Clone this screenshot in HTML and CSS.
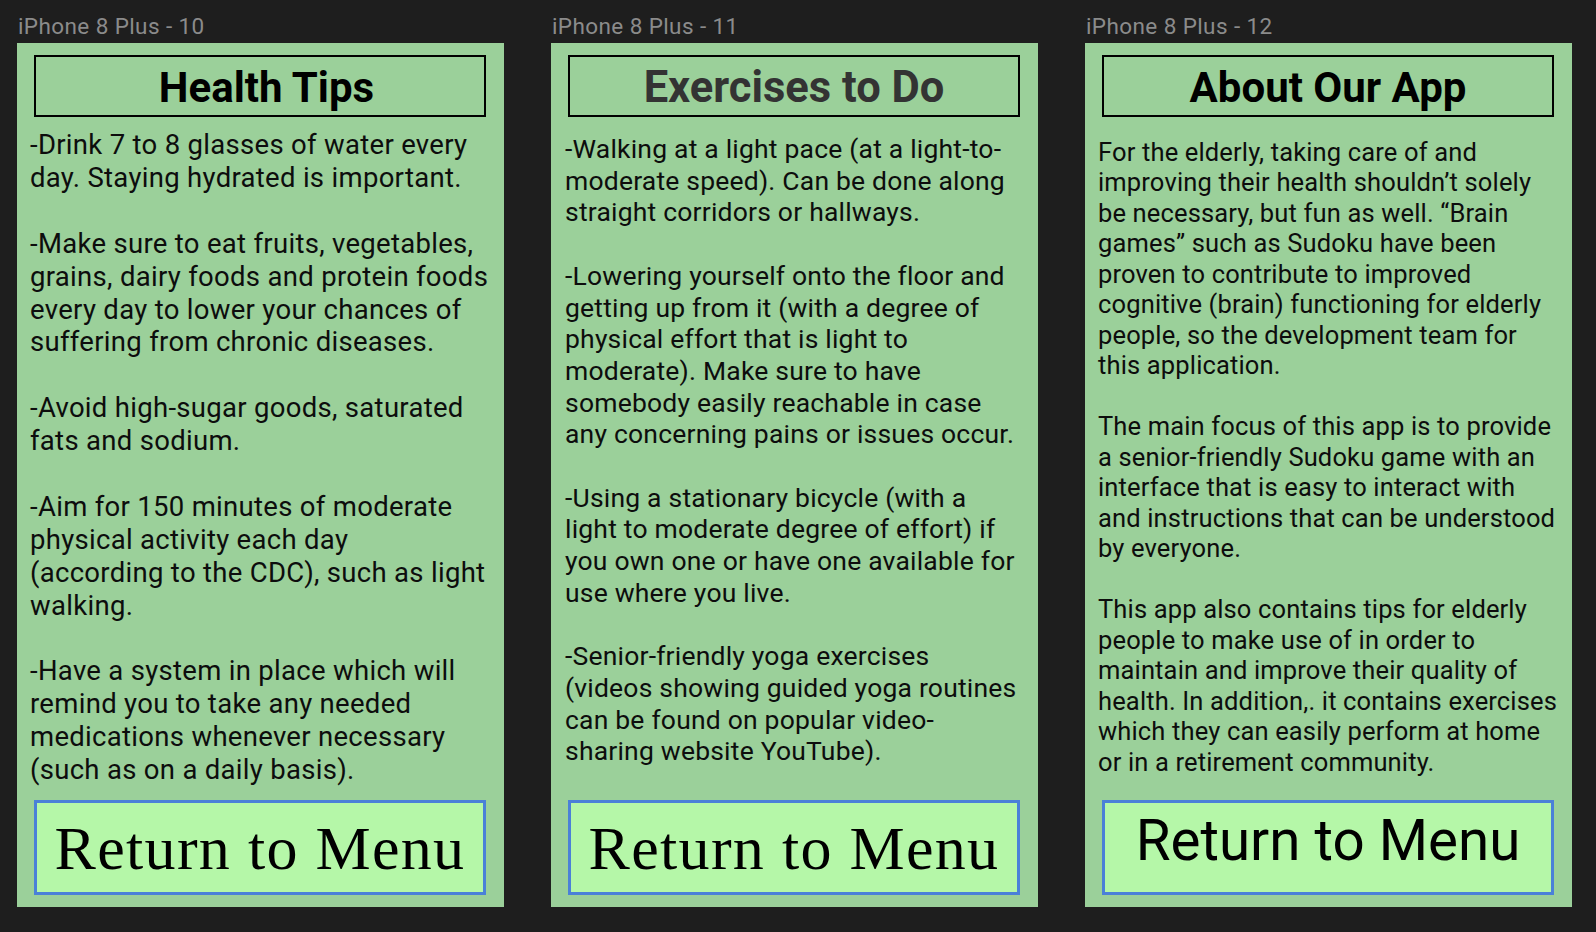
FILE: index.html
```html
<!DOCTYPE html>
<html lang="en">
<head>
<meta charset="utf-8">
<title>iPhone 8 Plus screens</title>
<link rel="stylesheet" href="styles.css">
</head>
<body>
<div class="canvas">
  <section class="frame">
    <div class="frame-label">iPhone 8 Plus - 10</div>
    <div class="screen">
      <h1 class="title title-shift">Health Tips</h1>
      <div class="body body-tips">
        <p>-Drink 7 to 8 glasses of water every<br>day. Staying hydrated is important.</p>
        <p>-Make sure to eat fruits, vegetables,<br>grains, dairy foods and protein foods<br>every day to lower your chances of<br>suffering from chronic diseases.</p>
        <p>-Avoid high-sugar goods, saturated<br>fats and sodium.</p>
        <p>-Aim for 150 minutes of moderate<br>physical activity each day<br>(according to the CDC), such as light<br>walking.</p>
        <p>-Have a system in place which will<br>remind you to take any needed<br>medications whenever necessary<br>(such as on a daily basis).</p>
      </div>
      <button class="menu-btn serif">Return to Menu</button>
    </div>
  </section>
  <section class="frame">
    <div class="frame-label">iPhone 8 Plus - 11</div>
    <div class="screen">
      <h1 class="title title-gray">Exercises to Do</h1>
      <div class="body body-ex">
        <p>-Walking at a light pace (at a light-to-<br>moderate speed). Can be done along<br>straight corridors or hallways.</p>
        <p>-Lowering yourself onto the floor and<br>getting up from it (with a degree of<br>physical effort that is light to<br>moderate). Make sure to have<br>somebody easily reachable in case<br>any concerning pains or issues occur.</p>
        <p>-Using a stationary bicycle (with a<br>light to moderate degree of effort) if<br>you own one or have one available for<br>use where you live.</p>
        <p>-Senior-friendly yoga exercises<br>(videos showing guided yoga routines<br>can be found on popular video-<br>sharing website YouTube).</p>
      </div>
      <button class="menu-btn serif">Return to Menu</button>
    </div>
  </section>
  <section class="frame">
    <div class="frame-label">iPhone 8 Plus - 12</div>
    <div class="screen">
      <h1 class="title">About Our App</h1>
      <div class="body body-about">
        <p>For the elderly, taking care of and<br>improving their health shouldn’t solely<br>be necessary, but fun as well. “Brain<br>games” such as Sudoku have been<br>proven to contribute to improved<br>cognitive (brain) functioning for elderly<br>people, so the development team for<br>this application.</p>
        <p>The main focus of this app is to provide<br>a senior-friendly Sudoku game with an<br>interface that is easy to interact with<br>and instructions that can be understood<br>by everyone.</p>
        <p>This app also contains tips for elderly<br>people to make use of in order to<br>maintain and improve their quality of<br>health. In addition,. it contains exercises<br>which they can easily perform at home<br>or in a retirement community.</p>
      </div>
      <button class="menu-btn sans">Return to Menu</button>
    </div>
  </section>
</div>
</body>
</html>
```

FILE: styles.css
```css
* { box-sizing: border-box; }

html, body {
  margin: 0;
  padding: 0;
  background: #1e1e1e;
  width: 1596px;
  height: 932px;
  overflow: hidden;
  font-family: Roboto, "Noto Sans", "Liberation Sans", sans-serif;
}

.canvas {
  display: flex;
  gap: 47px;
  padding-left: 17px;
}

.frame {
  width: 487px;
  display: flex;
  flex-direction: column;
}

.frame-label {
  height: 43px;
  padding-top: 13px;
  padding-left: 1px;
  font-size: 22.5px;
  letter-spacing: 0.4px;
  line-height: 26px;
  color: #8b8b8b;
  white-space: nowrap;
}

.screen {
  height: 864px;
  background: #9bd09a;
  display: flex;
  flex-direction: column;
  padding: 12px 18px 12px 17px;
}

.title {
  margin: 0;
  height: 62px;
  border: 2px solid #000;
  font-size: 42px;
  font-weight: 700;
  line-height: 55px;
  padding-top: 3px;
  text-align: center;
  color: #000;
  white-space: nowrap;
}

.title-shift { padding-left: 13px; }

.title-gray {
  color: #333333;
  font-size: 43.5px;
}

.body {
  flex: 1;
  color: #0d0d0d;
  margin: 0 -8px 0 -4px;
}

.body p {
  margin: 0;
  white-space: nowrap;
}

.body-tips {
  font-size: 27.5px;
  letter-spacing: 0.3px;
  line-height: 32.9px;
  padding-top: 12px;
}
.body-tips p + p { margin-top: 32.9px; }

.body-ex {
  font-size: 26.5px;
  letter-spacing: 0.2px;
  line-height: 31.7px;
  padding-top: 16px;
  margin-left: -3px;
}
.body-ex p + p { margin-top: 31.7px; }

.body-about {
  font-size: 25.5px;
  letter-spacing: 0.15px;
  line-height: 30.5px;
  padding-top: 19.5px;
  margin-left: -4px;
}
.body-about p + p { margin-top: 30.5px; }

.menu-btn {
  height: 95px;
  margin: 0;
  padding: 0;
  background: #b5f7a8;
  border: 3px solid #4a80d8;
  color: #000;
  text-align: center;
  width: 100%;
  white-space: nowrap;
}

.serif {
  font-family: "Liberation Serif", "DejaVu Serif", serif;
  font-size: 62px;
  letter-spacing: 1.3px;
  line-height: 1;
}

.sans {
  font-family: Roboto, "Noto Sans", sans-serif;
  font-size: 56.5px;
  line-height: 1;
  padding-bottom: 12px;
}
```
